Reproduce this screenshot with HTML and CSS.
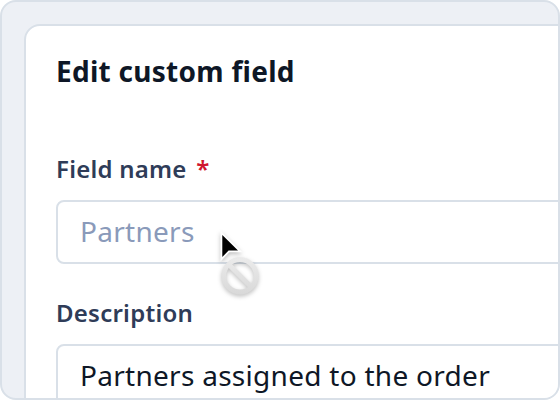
FILE: index.html
```html
<!DOCTYPE html>
<html lang="en">
<head>
	<meta charset="UTF-8">
	<title>Edit custom field</title>
	<link rel="stylesheet" href="styles.css">
</head>
<body>
	<div class="frame">
		<form class="card">
			<h1 class="title">Edit custom field</h1>
			<div class="field">
				<div class="label">Field name <span class="required">*</span></div>
				<div class="input disabled">Partners</div>
			</div>
			<div class="field">
				<div class="label">Description</div>
				<div class="input">Partners assigned to the order</div>
			</div>
		</form>
		<!-- mouse pointer with "not allowed" sign -->
		<svg class="cursor" width="60" height="80" viewBox="0 0 60 80">
			<defs>
				<linearGradient id="ring" gradientUnits="userSpaceOnUse" x1="0" y1="28" x2="0" y2="67">
					<stop offset="0" stop-color="#ececec"/>
					<stop offset="1" stop-color="#d8d8d8"/>
				</linearGradient>
			</defs>
			<g class="sign" stroke="url(#ring)">
				<circle cx="30" cy="47.8" r="16.2"/>
				<path d="M19 36.8L41 58.8"/>
			</g>
			<path class="arrow" d="M12.3 7V29L18.6 22.5H28z"/>
		</svg>
	</div>
</body>
</html>
```
FILE: styles.css
```css
*{margin: 0;padding: 0;box-sizing: border-box;}
body{
	background: #fff;
	font-family: "Noto Sans", sans-serif;
}
.frame{
	position: relative;
	width: 560px;
	height: 400px;
	padding: 22px 0 0 22px;
	border: 2px solid #d9e0e8;
	border-radius: 16px;
	background: #edf0f5;
	overflow: hidden;
}
.card{
	width: 640px;
	height: 500px;
	padding: 25px 30px;
	border: 2px solid #d9e0e8;
	border-radius: 16px;
	background: #fff;
}
.title{
	margin-bottom: 61px;
	font-size: 28px;
	line-height: 40px;
	font-weight: 700;
	letter-spacing: .01em;
	color: #0e1726;
}
.field{
	margin-bottom: 32px;
}
.label{
	margin-bottom: 14px;
	font-size: 24px;
	line-height: 34px;
	font-weight: 600;
	letter-spacing: .01em;
	color: #2f3c58;
}
.required{
	margin-left: 3px;
	color: #d0152f;
}
.input{
	height: 64px;
	padding: 0 22px;
	border: 2px solid #d9e0e8;
	border-radius: 8px;
	font-size: 28px;
	line-height: 58px;
	letter-spacing: .01em;
	color: #0e1726;
	white-space: nowrap;
}
.disabled{
	color: #8a9aba;
}
.cursor{
	position: absolute;
	left: 208px;
	top: 226px;
	overflow: visible;
}
.arrow{
	fill: #000;
	stroke: #fff;
	stroke-width: 3.6;
	paint-order: stroke;
	filter: drop-shadow(0 2px 2px rgba(0,0,0,.25));
}
.sign{
	fill: none;
	stroke-width: 4.8;
	filter: drop-shadow(0 2px 2px rgba(0,0,0,.25));
}
```
